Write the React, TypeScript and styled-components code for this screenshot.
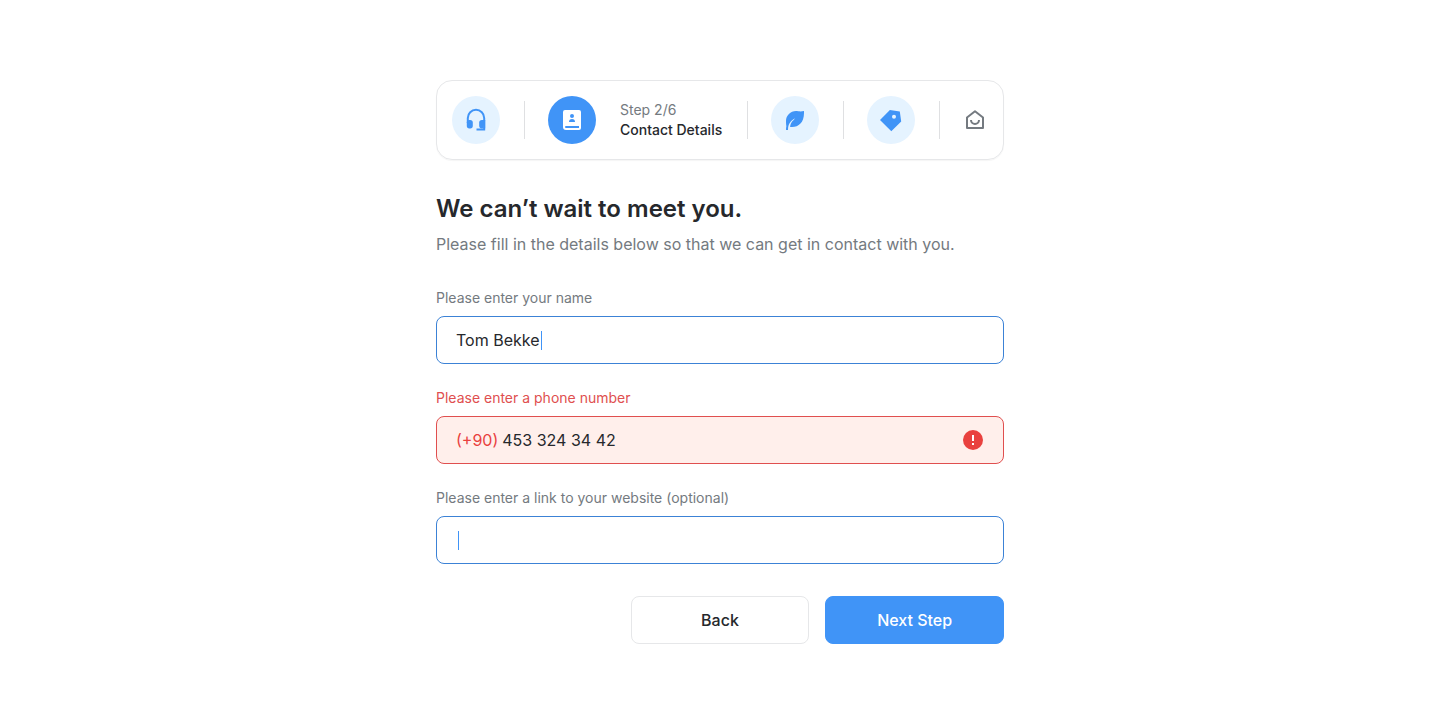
import React, { useState } from "react";
import styled, { createGlobalStyle, css } from "styled-components";

const color = {
  blue: "#4094f7",
  blueBorder: "#3c82d6",
  blueSoft: "#e5f3ff",
  ink: "#26282c",
  grey: "#747a80",
  line: "#e6e7e9",
  red: "#e9413e",
  redText: "#e04f4f",
  redSoft: "#ffefeb",
};

const GlobalStyle = createGlobalStyle`
  *, *::before, *::after { box-sizing: border-box; }
  body {
    margin: 0;
    background: #fff;
    color: ${color.ink};
    font-family: Inter, "Liberation Sans", sans-serif;
    font-size: 16px;
    line-height: 24px;
  }
  button, input { font: inherit; color: inherit; }
`;

const Page = styled.main`
  width: 100%;
  max-width: 600px;
  margin: 0 auto;
  padding: 80px 16px;
`;

const Steps = styled.nav`
  display: flex;
  align-items: center;
  padding: 15px;
  border: 1px solid ${color.line};
  border-radius: 16px;
  box-shadow: 0 1px 1px rgba(0, 0, 0, 0.04);
`;

const StepButton = styled.button<{ $variant: "soft" | "active" | "plain" }>`
  display: grid;
  place-items: center;
  flex: none;
  width: ${(p) => (p.$variant === "plain" ? 24 : 48)}px;
  height: 48px;
  padding: 0;
  border: 0;
  border-radius: 50%;
  cursor: pointer;
  ${(p) =>
    p.$variant === "soft" &&
    css`
      background: ${color.blueSoft};
      color: ${color.blue};
    `}
  ${(p) =>
    p.$variant === "active" &&
    css`
      background: ${color.blue};
      color: #fff;
    `}
  ${(p) =>
    p.$variant === "plain" &&
    css`
      background: transparent;
      color: ${color.grey};
    `}
`;

const Divider = styled.span`
  flex: none;
  width: 1px;
  height: 38px;
  margin: 0 23px 0 24px;
  background: #dfe0e2;
`;

const StepText = styled.div`
  min-width: 103px;
  margin-left: 24px;
  font-size: 14px;
  line-height: 20px;
  white-space: nowrap;
`;

const StepCount = styled.div`
  color: ${color.grey};
`;

const StepName = styled.div`
  font-weight: 500;
`;

const Title = styled.h1`
  margin: 32px 0 6px;
  font-size: 24px;
  line-height: 34px;
  font-weight: 600;
`;

const Intro = styled.p`
  margin: 0;
  color: ${color.grey};
`;

const Form = styled.form`
  display: flex;
  flex-direction: column;
  gap: 24px;
  margin-top: 32px;
`;

const Field = styled.div`
  display: flex;
  flex-direction: column;
  gap: 8px;
`;

const Label = styled.label<{ $error?: boolean }>`
  font-size: 14px;
  line-height: 20px;
  color: ${(p) => (p.$error ? color.redText : color.grey)};
`;

const Control = styled.label<{ $error?: boolean }>`
  display: flex;
  align-items: center;
  height: 48px;
  padding: 0 20px 0 19px;
  border: 1px solid ${(p) => (p.$error ? color.redText : color.blueBorder)};
  border-radius: 8px;
  background: ${(p) => (p.$error ? color.redSoft : "#fff")};
  cursor: text;
`;

const Prefix = styled.span`
  margin-right: 4px;
  color: ${color.red};
`;

const TextInput = styled.input<{ $fit?: boolean }>`
  ${(p) =>
    p.$fit
      ? css`
          field-sizing: content;
          min-width: 1px;
          max-width: 100%;
        `
      : css`
          flex: 1;
          min-width: 0;
        `}
  padding: 0;
  border: 0;
  outline: 0;
  background: transparent;
  caret-color: transparent;
`;

const Caret = styled.span`
  flex: none;
  width: 1px;
  height: 19px;
  margin-left: 1px;
  background: ${color.blue};
`;

const Actions = styled.div`
  display: grid;
  grid-template-columns: repeat(3, 1fr);
  gap: 16px;
  margin-top: 8px;
`;

const ActionButton = styled.button<{ $primary?: boolean }>`
  height: 48px;
  padding: 0;
  border: 1px solid ${(p) => (p.$primary ? color.blue : color.line)};
  border-radius: 8px;
  background: ${(p) => (p.$primary ? color.blue : "#fff")};
  color: ${(p) => (p.$primary ? "#fff" : color.ink)};
  font-weight: 500;
  cursor: pointer;

  &:first-child {
    grid-column: 2;
  }
`;

const Icon = ({ children }: { children: React.ReactNode }) => (
  <svg width="24" height="24" viewBox="0 0 24 24" fill="currentColor" aria-hidden="true">
    {children}
  </svg>
);

const HeadsetIcon = () => (
  <Icon>
    <path
      d="M3.800 15v-5a8.200 8.200 0 0 1 16.400 0v11.500H12.500"
      fill="none"
      stroke="currentColor"
      strokeWidth="2"
    />
    <rect x="2.800" y="12" width="6" height="8.400" rx="2.600" />
    <path d="M21.200 12h-3.400a2.600 2.600 0 0 0-2.600 2.600v3.200a2.600 2.600 0 0 0 2.600 2.600h1z" />
    <path d="M19.200 12h2v8.400h-2z" />
  </Icon>
);

const ContactsIcon = () => (
  <Icon>
    <path
      fillRule="evenodd"
      d="M5 2h14a2 2 0 0 1 2 2v16a2 2 0 0 1-2 2H6a3 3 0 0 1-3-3V4a2 2 0 0 1 2-2zm1 16a1 1 0 0 0 0 2h13v-2zm6-8a2 2 0 1 0 0-4 2 2 0 0 0 0 4zm-3 4h6a3 3 0 0 0-6 0z"
    />
  </Icon>
);

const LeafIcon = () => (
  <Icon>
    <path d="M21 3v2c0 9.627-5.373 14-12 14H7.098c.212-3.012 1.150-4.835 3.598-7.001 1.204-1.065 1.102-1.680.509-1.327-4.084 2.430-6.112 5.714-6.202 10.958L5 22H3c0-1.363.116-2.600.346-3.732C3.116 16.974 3 15.218 3 13 3 7.477 7.477 3 13 3c2 0 4 1 8 0z" />
  </Icon>
);

const TagIcon = () => (
  <Icon>
    <path
      fillRule="evenodd"
      d="M10.900 2.100l9.900 1.410 1.410 9.900L12.300 23.300 1 12zM15 10.700a2 2 0 1 0 0-4 2 2 0 0 0 0 4z"
    />
  </Icon>
);

const HomeSmileIcon = () => (
  <svg
    width="24"
    height="24"
    viewBox="0 0 24 24"
    fill="none"
    stroke="currentColor"
    strokeWidth="2"
    strokeLinejoin="round"
    aria-hidden="true"
  >
    <path d="M4 9.500 12 3.300l8 6.200V20H4z" />
    <path d="M8 12a4 4 0 0 0 8 0" />
  </svg>
);

const AlertIcon = () => (
  <svg width="20" height="20" viewBox="0 0 20 20" role="img" aria-label="Invalid">
    <circle cx="10" cy="10" r="10" fill={color.red} />
    <path d="M10 5v6M10 13v2" stroke="#fff" strokeWidth="2" />
  </svg>
);

export default function App() {
  const [name, setName] = useState("Tom Bekke");
  const [phone, setPhone] = useState("453 324 34 42");
  const [website, setWebsite] = useState("");

  return (
    <>
      <GlobalStyle />
      <Page>
        <Steps aria-label="Progress">
          <StepButton $variant="soft" aria-label="Support">
            <HeadsetIcon />
          </StepButton>
          <Divider />
          <StepButton $variant="active" aria-label="Contact" aria-current="step">
            <ContactsIcon />
          </StepButton>
          <StepText>
            <StepCount>Step 2/6</StepCount>
            <StepName>Contact Details</StepName>
          </StepText>
          <Divider />
          <StepButton $variant="soft" aria-label="Environment">
            <LeafIcon />
          </StepButton>
          <Divider />
          <StepButton $variant="soft" aria-label="Pricing">
            <TagIcon />
          </StepButton>
          <Divider />
          <StepButton $variant="plain" aria-label="Home">
            <HomeSmileIcon />
          </StepButton>
        </Steps>

        <Title>We can’t wait to meet you.</Title>
        <Intro>Please fill in the details below so that we can get in contact with you.</Intro>

        <Form onSubmit={(e) => e.preventDefault()}>
          <Field>
            <Label htmlFor="name">Please enter your name</Label>
            <Control htmlFor="name">
              <TextInput id="name" $fit value={name} onChange={(e) => setName(e.target.value)} />
              <Caret />
            </Control>
          </Field>
          <Field>
            <Label htmlFor="phone" $error>
              Please enter a phone number
            </Label>
            <Control htmlFor="phone" $error>
              <Prefix>(+90)</Prefix>
              <TextInput
                id="phone"
                type="tel"
                aria-invalid="true"
                value={phone}
                onChange={(e) => setPhone(e.target.value)}
              />
              <AlertIcon />
            </Control>
          </Field>
          <Field>
            <Label htmlFor="website">Please enter a link to your website (optional)</Label>
            <Control htmlFor="website">
              <TextInput id="website" $fit value={website} onChange={(e) => setWebsite(e.target.value)} />
              <Caret />
            </Control>
          </Field>
          <Actions>
            <ActionButton type="button">Back</ActionButton>
            <ActionButton type="submit" $primary>
              Next Step
            </ActionButton>
          </Actions>
        </Form>
      </Page>
    </>
  );
}
